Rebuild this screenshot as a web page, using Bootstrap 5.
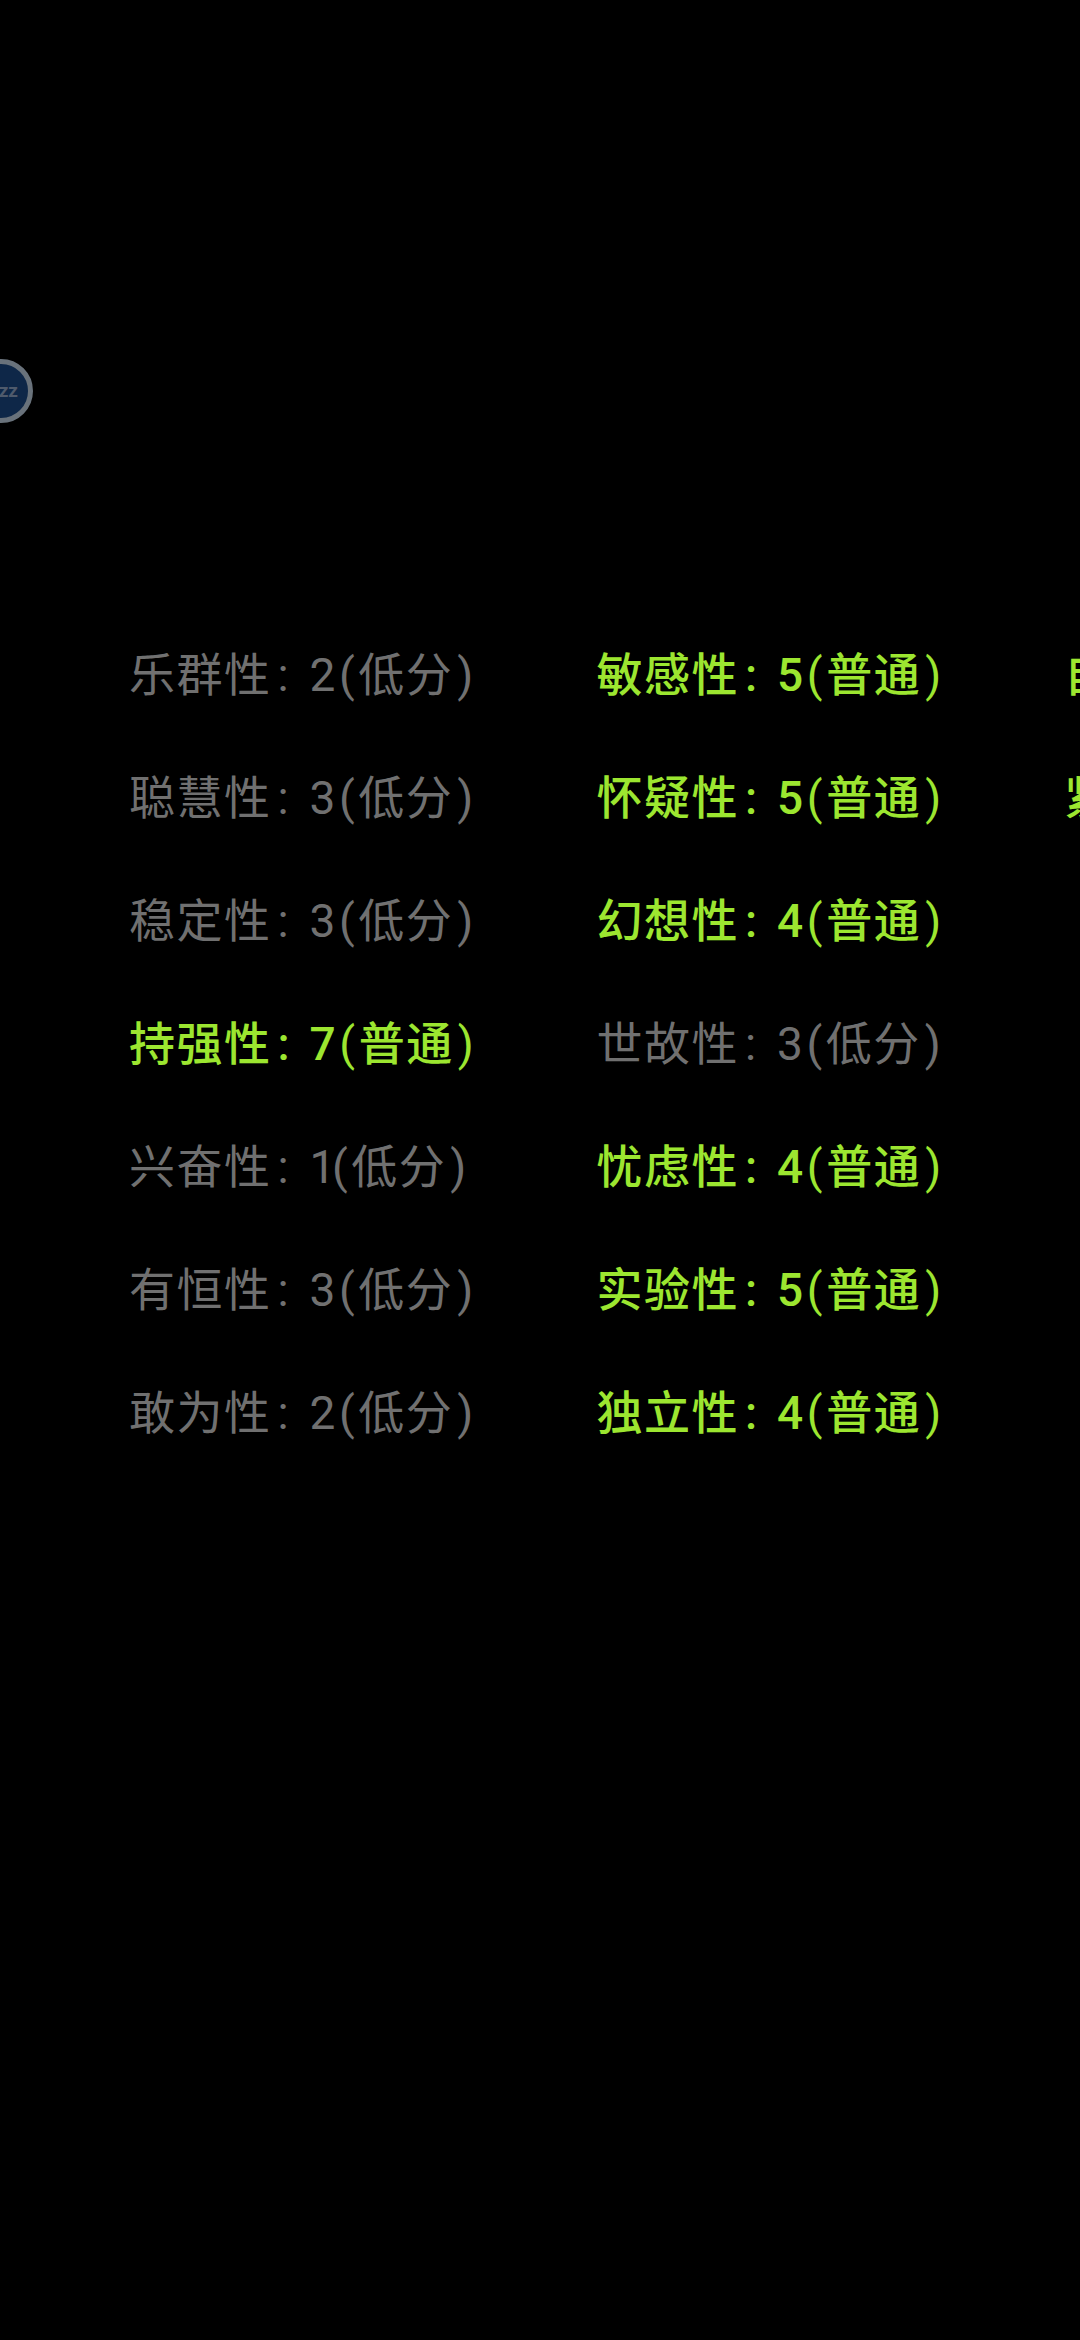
<!DOCTYPE html>
<html lang="zh">
<head>
<meta charset="utf-8">
<title>16PF</title>
<link href="https://cdn.jsdelivr.net/npm/bootstrap@5.3.0/dist/css/bootstrap.min.css" rel="stylesheet">
<style>
html,body{background:#000;height:100%;margin:0;overflow:hidden}
.stage{width:1080px;height:2340px;overflow:hidden;position:relative;background:#000;font-family:Roboto,"Noto Sans CJK SC",sans-serif}
.factors{padding-top:614px;padding-left:129px;width:1600px}
.factor-col{width:467.5px;flex:none}
.factor{height:123px;font-size:46px;font-weight:400;letter-spacing:1.5px;line-height:123px;white-space:nowrap;color:#707070}
.factor.hi{color:#9ce630;font-weight:500}
.sep{display:inline-block;width:38px;padding-left:6px}
.pl{display:inline-block;width:21.5px;text-align:center;font-weight:400}
.pr{display:inline-block;padding-left:4px;font-weight:400}
.one{letter-spacing:-5.5px}
.float-ball{position:absolute;left:-31px;top:359px;width:64px;height:64px;border-radius:50%;background:#0e2748;border:5px solid #69727b;color:#4e5a6c;font-size:19px;font-weight:700;letter-spacing:0;text-align:right;line-height:54px;padding-right:10px}
</style>
</head>
<body>
<div class="stage">
  <div class="float-ball">zz</div>
  <div class="factors d-flex">
    <div class="factor-col">
      <div class="factor">乐群性<span class="sep">:</span>2<span class="pl">(</span>低分<span class="pr">)</span></div>
      <div class="factor">聪慧性<span class="sep">:</span>3<span class="pl">(</span>低分<span class="pr">)</span></div>
      <div class="factor">稳定性<span class="sep">:</span>3<span class="pl">(</span>低分<span class="pr">)</span></div>
      <div class="factor hi">持强性<span class="sep">:</span>7<span class="pl">(</span>普通<span class="pr">)</span></div>
      <div class="factor">兴奋性<span class="sep">:</span><span class="one">1</span><span class="pl">(</span>低分<span class="pr">)</span></div>
      <div class="factor">有恒性<span class="sep">:</span>3<span class="pl">(</span>低分<span class="pr">)</span></div>
      <div class="factor">敢为性<span class="sep">:</span>2<span class="pl">(</span>低分<span class="pr">)</span></div>
    </div>
    <div class="factor-col">
      <div class="factor hi">敏感性<span class="sep">:</span>5<span class="pl">(</span>普通<span class="pr">)</span></div>
      <div class="factor hi">怀疑性<span class="sep">:</span>5<span class="pl">(</span>普通<span class="pr">)</span></div>
      <div class="factor hi">幻想性<span class="sep">:</span>4<span class="pl">(</span>普通<span class="pr">)</span></div>
      <div class="factor">世故性<span class="sep">:</span>3<span class="pl">(</span>低分<span class="pr">)</span></div>
      <div class="factor hi">忧虑性<span class="sep">:</span>4<span class="pl">(</span>普通<span class="pr">)</span></div>
      <div class="factor hi">实验性<span class="sep">:</span>5<span class="pl">(</span>普通<span class="pr">)</span></div>
      <div class="factor hi">独立性<span class="sep">:</span>4<span class="pl">(</span>普通<span class="pr">)</span></div>
    </div>
    <div class="factor-col">
      <div class="factor hi">自律性<span class="sep">:</span>5<span class="pl">(</span>普通<span class="pr">)</span></div>
      <div class="factor hi">紧张性<span class="sep">:</span>5<span class="pl">(</span>普通<span class="pr">)</span></div>
    </div>
  </div>
</div>
<script src="https://cdn.jsdelivr.net/npm/bootstrap@5.3.0/dist/js/bootstrap.bundle.min.js"></script>
</body>
</html>
